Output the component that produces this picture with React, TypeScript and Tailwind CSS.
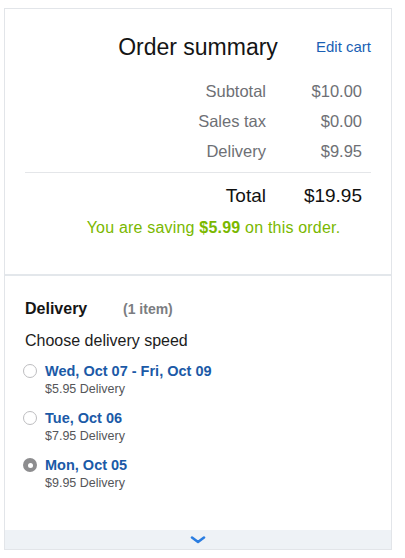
import * as React from "react";

const rows = [
  { label: "Subtotal", value: "$10.00" },
  { label: "Sales tax", value: "$0.00" },
  { label: "Delivery", value: "$9.95" },
];

const options = [
  { date: "Wed, Oct 07 - Fri, Oct 09", price: "$5.95 Delivery", selected: false },
  { date: "Tue, Oct 06", price: "$7.95 Delivery", selected: false },
  { date: "Mon, Oct 05", price: "$9.95 Delivery", selected: true },
];

function Radio({ selected }: { selected: boolean }) {
  if (selected) {
    return (
      <span className="flex h-[14px] w-[14px] shrink-0 items-center justify-center rounded-full bg-[#8d8d8f]">
        <span className="h-[5px] w-[5px] rounded-full bg-white" />
      </span>
    );
  }
  return <span className="h-[14px] w-[14px] shrink-0 rounded-full border border-[#bdbdc0] bg-white" />;
}

export default function App() {
  return (
    <div className="min-h-[558px] bg-white pl-[4px] pt-[8px] font-['Liberation_Sans',Arial,sans-serif]">
      <div className="flex w-[388px] flex-col border border-[#e2e5e9] bg-white">
        <section className="h-[265px] px-[20px] pt-[24px]">
          <div className="grid grid-cols-[1fr_auto_1fr] items-center">
            <span />
            <h1 className="text-[23px] leading-[28px] text-[#151515]">Order summary</h1>
            <a className="justify-self-end text-[15px] leading-[20px] text-[#1a5fb4]">Edit cart</a>
          </div>
          <div className="mt-[15px] flex flex-col">
            {rows.map((row) => (
              <div key={row.label} className="flex h-[30px] items-center justify-end pr-[9px] text-[16.5px] text-[#6e7075]">
                <span>{row.label}</span>
                <span className="w-[96px] text-right">{row.value}</span>
              </div>
            ))}
          </div>
          <div className="mt-[6px] h-px bg-[#e4e6e9]" />
          <div className="mt-[9px] flex h-[28px] items-center justify-end pr-[9px] text-[19px] text-[#111]">
            <span>Total</span>
            <span className="w-[96px] text-right">$19.95</span>
          </div>
          <p className="mt-[8px] pl-[31px] text-center text-[16px] leading-[20px] tracking-[0.2px] text-[#7ab800]">
            You are saving <b>$5.99</b> on this order.
          </p>
        </section>
        <div className="h-[2px] bg-[#e3e7eb]" />
        <section className="h-[254px] px-[20px] pt-[23px]">
          <div className="flex items-center leading-[20px]">
            <span className="w-[98px] text-[16px] font-bold text-[#151515]">Delivery</span>
            <span className="text-[14px] font-bold text-[#7b7d81]">(1 item)</span>
          </div>
          <div className="mt-[11px] text-[16px] leading-[22px] text-[#1c1c1c]">Choose delivery speed</div>
          <div className="mt-[10px] -ml-[2px] flex flex-col gap-[12px]">
            {options.map((option) => (
              <div key={option.date} className="flex items-start gap-[8px]">
                <div className="flex h-[18px] items-center">
                  <Radio selected={option.selected} />
                </div>
                <div className="flex flex-col">
                  <span className="text-[14.5px] font-bold leading-[18px] text-[#1b5aa7]">{option.date}</span>
                  <span className="mt-[1px] text-[12.5px] leading-[16px] text-[#555659]">{option.price}</span>
                </div>
              </div>
            ))}
          </div>
        </section>
        <div className="flex h-[19px] items-center justify-center bg-[#eef2f6]">
          <svg width="16" height="8" viewBox="0 0 16 8" className="mt-[1px]">
            <path d="M2 1.5 L8 6 L14 1.5" fill="none" stroke="#2a7de1" strokeWidth="2.6" strokeLinecap="round" strokeLinejoin="round" />
          </svg>
        </div>
      </div>
    </div>
  );
}
